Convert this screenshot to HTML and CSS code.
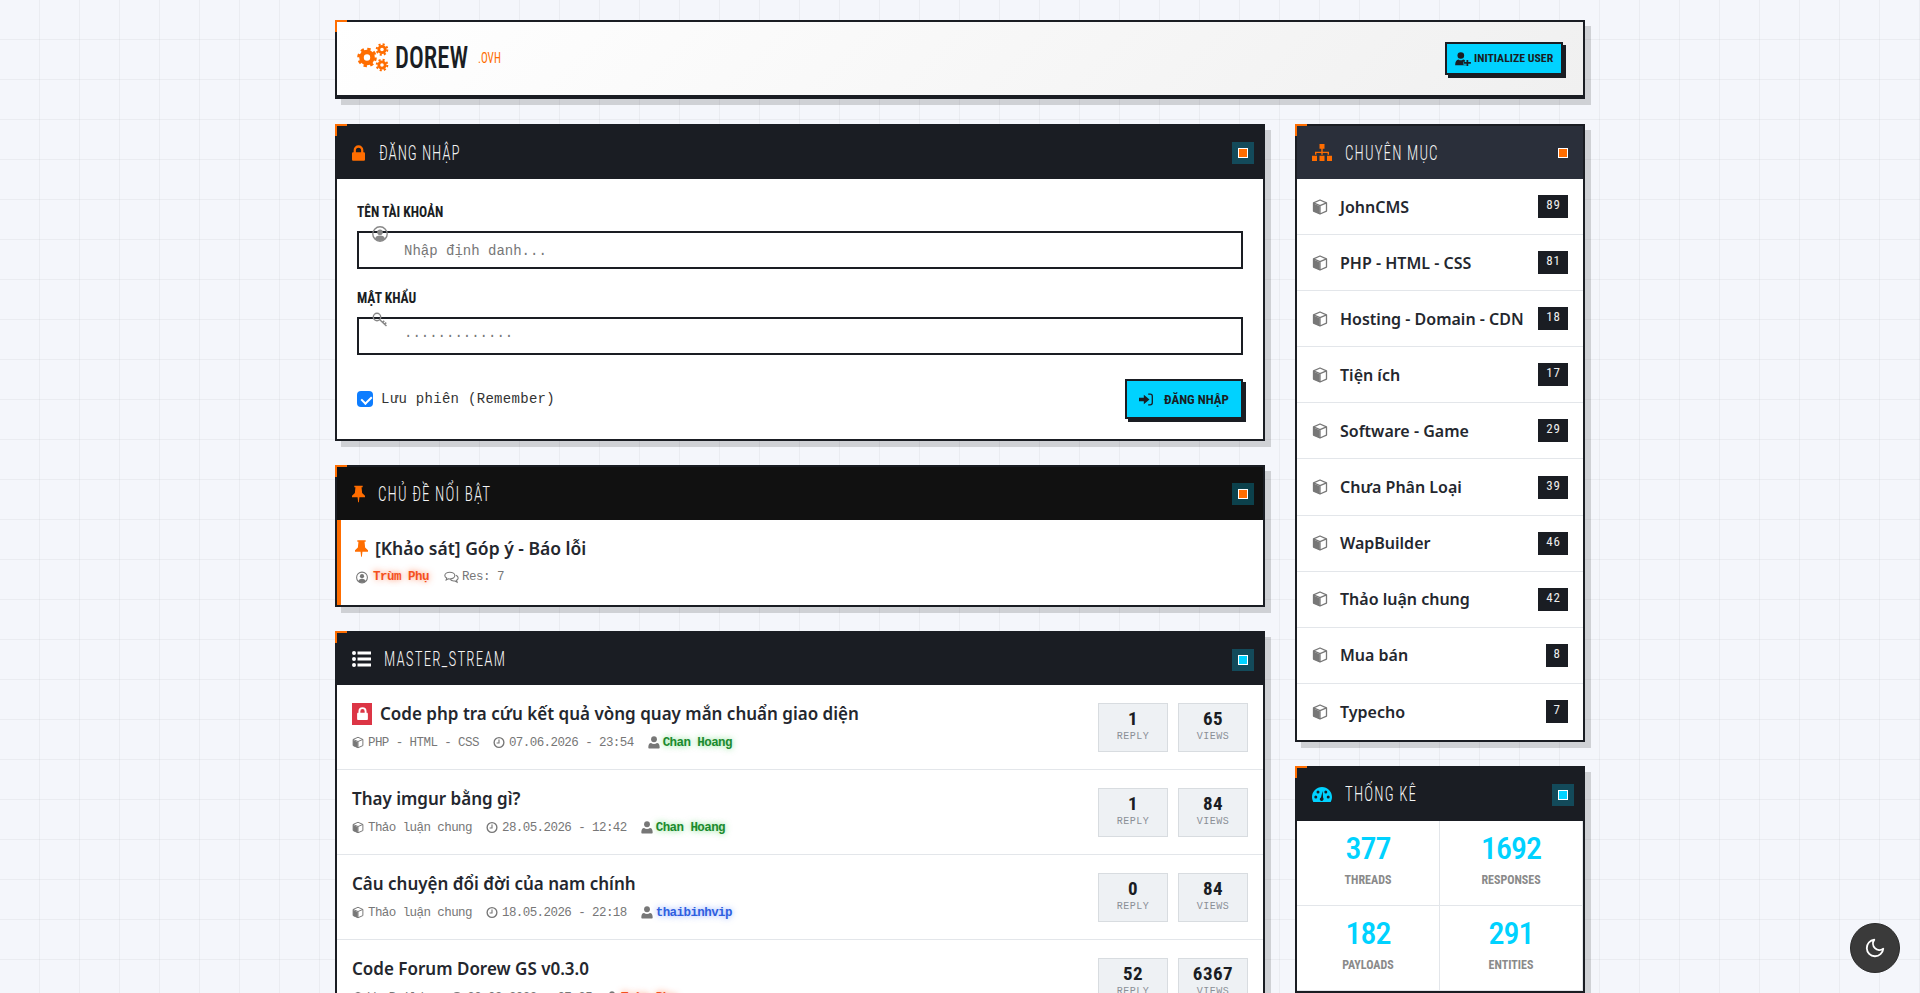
FILE: index.html
```html
<!DOCTYPE html>
<html lang="vi">
<head>
<meta charset="utf-8">
<title>DOREW .OVH</title>
<link rel="stylesheet" href="styles.css">
</head>
<body>
<svg class="defs" width="0" height="0" aria-hidden="true">
  <symbol id="cube" viewBox="0 0 16 16"><path d="M1.5 4.6 7.7 7.2V15L1.5 12.2z" fill="currentColor"/><path d="M8 1 14.5 3.9V12.1L8 15 1.5 12.1V3.9zM1.5 3.9 8 6.7l6.5-2.8M8 6.7V15" fill="none" stroke="currentColor" stroke-width="1.3" stroke-linejoin="round"/></symbol>
  <symbol id="lock" viewBox="2 .5 12 14.500"><path fill-rule="evenodd" fill="currentColor" d="M3.5 7V5.2a4.5 4.5 0 0 1 9 0V7h.3c.7 0 1.2.5 1.2 1.2v5.6c0 .7-.5 1.2-1.2 1.2H3.2C2.5 15 2 14.500 2 13.800V8.200C2 7.500 2.500 7 3.200 7zM5.600 7h4.800V5.200a2.400 2.400 0 0 0-4.800 0z"/></symbol>
  <symbol id="sitemap" viewBox="0 0 20 16" preserveAspectRatio="none"><path fill="currentColor" d="M7.500 0h5v4.500h-1.800v2.700h6.300v3h-1.400V8.500h-4.900v1.700H9.300V8.500H4.400v1.700H3v-3h6.300V4.500H7.500zM0 11h5v5H0zM7.500 11h5v5h-5zM15 11h5v5h-5z"/></symbol>
  <symbol id="pin" viewBox="1 0 14 18"><path fill="currentColor" d="M3.500 0h9v1.800h-1.200l.6 6.200L15 11v1.600H9l-.6 5.400h-.8L7 12.600H1V11l3.100-3 .6-6.200H3.500z"/></symbol>
  <symbol id="list" viewBox="0 0 19 16"><path fill="currentColor" d="M0 2a2 2 0 1 1 4 0 2 2 0 0 1-4 0zM0 8a2 2 0 1 1 4 0 2 2 0 0 1-4 0zM0 14a2 2 0 1 1 4 0 2 2 0 0 1-4 0zM5.500.6H19v2.800H5.500zM5.500 6.600H19v2.800H5.500zM5.500 12.600H19v2.800H5.500z"/></symbol>
  <symbol id="usercircle" viewBox="0 0 16 16"><circle cx="8" cy="8" r="7.200" fill="none" stroke="currentColor" stroke-width="1.400"/><circle cx="8" cy="6.200" r="2.800" fill="currentColor"/><path fill="currentColor" d="M2.900 13c.5-2.400 2.400-3.500 5.100-3.500s4.600 1.100 5.100 3.500C11.800 14.300 10 15 8 15s-3.800-.7-5.100-2z"/></symbol>
  <symbol id="key" viewBox="0 0 16 16"><circle cx="5" cy="5" r="3.700" fill="none" stroke="currentColor" stroke-width="1.400"/><path d="M7.800 7.800 14.500 14M10.500 10.300l1.800-1.500M12.500 12.200l1.800-1.500" fill="none" stroke="currentColor" stroke-width="1.500"/></symbol>
  <symbol id="userplus" viewBox="0 0 18 16"><circle cx="6.500" cy="4" r="3.800" fill="currentColor"/><path fill="currentColor" d="M0 15c0-4 1.800-6.500 3.800-6.500 1 .7 1.800 1 2.700 1s1.700-.3 2.700-1c.8 0 1.500.3 2 .9v1.600h-1.700v3.500H13V15z"/><path fill="currentColor" d="M13 9h2v2.500h3v2h-3V16h-2v-2.500h-3v-2h3z"/></symbol>
  <symbol id="signin" viewBox="0 0 16 14"><path fill="currentColor" d="M0 5h5.500V1.500L12 7l-6.500 5.500V9H0z"/><path fill="none" stroke="currentColor" stroke-width="1.500" d="M10.500 .8h2.300c1.200 0 2.400 1 2.400 2.400v7.600c0 1.400-1.200 2.400-2.400 2.400h-2.300"/></symbol>
  <symbol id="clock" viewBox="0 0 16 16"><circle cx="8" cy="8" r="6.500" fill="none" stroke="currentColor" stroke-width="1.800"/><path d="M8 4v4.600H4.800" fill="none" stroke="currentColor" stroke-width="1.500"/></symbol>
  <symbol id="user" viewBox="0 0 14 16"><circle cx="7" cy="4" r="3.600" fill="currentColor"/><path fill="currentColor" d="M1 15.500C.3 15.500 0 15 0 14.300 0 11 1 8.500 3.400 8.500c.9.800 2.200 1.200 3.600 1.200s2.700-.4 3.600-1.200c2.400 0 3.400 2.500 3.400 5.800 0 .7-.3 1.200-1 1.200z"/></symbol>
  <symbol id="comments" viewBox="0 0 18 15"><path fill="none" stroke="currentColor" stroke-width="1.300" d="M7 1.200c3.300 0 6 1.800 6 4s-2.700 4-6 4c-.7 0-1.300-.1-1.900-.2L2.600 10.400l.6-2.200C1.800 7.500 1 6.400 1 5.200c0-2.200 2.700-4 6-4z"/><path fill="none" stroke="currentColor" stroke-width="1.300" d="M14.200 4.800C16 5.500 17 6.600 17 8c0 1.100-.7 2.100-1.900 2.800l.6 2.300-2.600-1.500c-2.200.3-4.600-.4-5.600-1.800"/></symbol>
  <symbol id="gauge" viewBox="0 0 20 15"><path fill="currentColor" fill-rule="evenodd" d="M10 0c5.500 0 10 4.500 10 10 0 1.800-.5 3.500-1.300 5H1.300C.5 13.500 0 11.800 0 10 0 4.500 4.500 0 10 0zM3.800 8.500a1.500 1.500 0 1 0 0 3 1.500 1.500 0 0 0 0-3zM6 3.500a1.500 1.500 0 1 0 0 3 1.500 1.500 0 0 0 0-3zM13.800 3.500a1.500 1.500 0 1 0 0 3 1.500 1.500 0 0 0 0-3zM16.200 8.500a1.500 1.500 0 1 0 0 3 1.500 1.500 0 0 0 0-3zM10.600 4 9 10.500c-1 .4-1.500 1.500-1 2.500.500.9 1.600 1.200 2.500.8.900-.4 1.300-1.500.9-2.500l-.3-.5z"/></symbol>
  <symbol id="moon" viewBox="0 0 24 24"><path d="M21 12.790A9 9 0 1 1 11.210 3 7 7 0 0 0 21 12.790z" fill="none" stroke="currentColor" stroke-width="2" stroke-linejoin="round"/></symbol>
</svg>

<div class="wrap">
  <header class="topbar">
    <a class="brand">
      <svg class="gears" viewBox="0 0 32 29" width="32" height="29" aria-hidden="true">
        <g fill="none" stroke="#ff6d00">
          <circle cx="10" cy="14.500" r="5.500" stroke-width="4.600"/><circle cx="10" cy="14.500" r="8.500" stroke-width="2.600" stroke-dasharray="3.340 3.340"/>
          <circle cx="25" cy="6.500" r="3.200" stroke-width="2.800"/><circle cx="25" cy="6.500" r="5.300" stroke-width="2" stroke-dasharray="2.080 2.080"/>
          <circle cx="25" cy="22" r="3.200" stroke-width="2.800"/><circle cx="25" cy="22" r="5.300" stroke-width="2" stroke-dasharray="2.080 2.080"/>
        </g>
      </svg>
      <span class="brand-name">DOREW</span>
      <span class="brand-tld">.OVH</span>
    </a>
    <button class="btn btn-init" type="button"><svg class="i-user-plus"><use href="#userplus"/></svg><span>INITIALIZE USER</span></button>
  </header>

  <div class="layout">
    <main class="col-main">
      <section class="card">
        <div class="card-head">
          <svg class="hi hi-lock"><use href="#lock"/></svg>
          <h2 class="head-title head-login">ĐĂNG NHẬP</h2>
          <span class="mark mark-orange mark-ring"></span>
        </div>
        <form class="login">
          <div class="group">
            <label class="lbl" for="u">TÊN TÀI KHOẢN</label>
            <svg class="field-ico"><use href="#usercircle"/></svg>
            <input class="field" id="u" type="text" placeholder="Nhập định danh...">
          </div>
          <div class="group">
            <label class="lbl" for="p">MẬT KHẨU</label>
            <svg class="field-ico"><use href="#key"/></svg>
            <input class="field field-pass" id="p" type="text" placeholder=".............">
          </div>
          <div class="form-foot">
            <label class="remember"><input type="checkbox" checked><span>Lưu phiên (Remember)</span></label>
            <button class="btn btn-login" type="button"><svg class="i-signin"><use href="#signin"/></svg><span>ĐĂNG NHẬP</span></button>
          </div>
        </form>
      </section>

      <section class="card">
        <div class="card-head head-black">
          <svg class="hi hi-pin"><use href="#pin"/></svg>
          <h2 class="head-title">CHỦ ĐỀ NỔI BẬT</h2>
          <span class="mark mark-orange mark-ring"></span>
        </div>
        <div class="featured">
          <div class="feat-title"><svg class="feat-pin"><use href="#pin"/></svg><span>[Khảo sát] Góp ý - Báo lỗi</span></div>
          <div class="feat-meta">
            <svg class="m-ico m-uc"><use href="#usercircle"/></svg><span class="name name-red">Trùm Phụ</span>
            <svg class="m-ico m-cm"><use href="#comments"/></svg><span>Res: 7</span>
          </div>
        </div>
      </section>

      <section class="card">
        <div class="card-head head-stream">
          <svg class="hi hi-list"><use href="#list"/></svg>
          <h2 class="head-title head-mono">MASTER_STREAM</h2>
          <span class="mark mark-cyan mark-ring"></span>
        </div>
        <article class="topic">
          <div class="topic-body">
            <h3 class="topic-title"><span class="lockbox"><svg><use href="#lock"/></svg></span>Code php tra cứu kết quả vòng quay mắn chuẩn giao diện</h3>
            <div class="meta">
              <span class="mi"><svg class="m-ico"><use href="#cube"/></svg>PHP - HTML - CSS</span>
              <span class="mi"><svg class="m-ico"><use href="#clock"/></svg>07.06.2026 - 23:54</span>
              <span class="mi"><svg class="m-ico"><use href="#user"/></svg><span class="name name-green">Chan Hoang</span></span>
            </div>
          </div>
          <div class="stat"><b>1</b><small>REPLY</small></div>
          <div class="stat"><b>65</b><small>VIEWS</small></div>
        </article>
        <article class="topic">
          <div class="topic-body">
            <h3 class="topic-title">Thay imgur bằng gì?</h3>
            <div class="meta">
              <span class="mi"><svg class="m-ico"><use href="#cube"/></svg>Thảo luận chung</span>
              <span class="mi"><svg class="m-ico"><use href="#clock"/></svg>28.05.2026 - 12:42</span>
              <span class="mi"><svg class="m-ico"><use href="#user"/></svg><span class="name name-green">Chan Hoang</span></span>
            </div>
          </div>
          <div class="stat"><b>1</b><small>REPLY</small></div>
          <div class="stat"><b>84</b><small>VIEWS</small></div>
        </article>
        <article class="topic">
          <div class="topic-body">
            <h3 class="topic-title">Câu chuyện đổi đời của nam chính</h3>
            <div class="meta">
              <span class="mi"><svg class="m-ico"><use href="#cube"/></svg>Thảo luận chung</span>
              <span class="mi"><svg class="m-ico"><use href="#clock"/></svg>18.05.2026 - 22:18</span>
              <span class="mi"><svg class="m-ico"><use href="#user"/></svg><span class="name name-blue">thaibinhvip</span></span>
            </div>
          </div>
          <div class="stat"><b>0</b><small>REPLY</small></div>
          <div class="stat"><b>84</b><small>VIEWS</small></div>
        </article>
        <article class="topic">
          <div class="topic-body">
            <h3 class="topic-title">Code Forum Dorew GS v0.3.0</h3>
            <div class="meta">
              <span class="mi"><svg class="m-ico"><use href="#cube"/></svg>WapBuilder</span>
              <span class="mi"><svg class="m-ico"><use href="#clock"/></svg>30.09.2023 - 07:35</span>
              <span class="mi"><svg class="m-ico"><use href="#user"/></svg><span class="name name-red">Trùm Phụ</span></span>
            </div>
          </div>
          <div class="stat"><b>52</b><small>REPLY</small></div>
          <div class="stat"><b>6367</b><small>VIEWS</small></div>
        </article>
      </section>
    </main>

    <aside class="col-side">
      <section class="card">
        <div class="card-head head-slate">
          <svg class="hi hi-sitemap"><use href="#sitemap"/></svg>
          <h2 class="head-title">CHUYÊN MỤC</h2>
          <span class="mark mark-orange mark-side"></span>
        </div>
        <ul class="cats">
          <li class="cat"><svg class="cat-ico"><use href="#cube"/></svg><span class="cat-name">JohnCMS</span><span class="count">89</span></li>
          <li class="cat"><svg class="cat-ico"><use href="#cube"/></svg><span class="cat-name">PHP - HTML - CSS</span><span class="count">81</span></li>
          <li class="cat"><svg class="cat-ico"><use href="#cube"/></svg><span class="cat-name">Hosting - Domain - CDN</span><span class="count">18</span></li>
          <li class="cat"><svg class="cat-ico"><use href="#cube"/></svg><span class="cat-name">Tiện ích</span><span class="count">17</span></li>
          <li class="cat"><svg class="cat-ico"><use href="#cube"/></svg><span class="cat-name">Software - Game</span><span class="count">29</span></li>
          <li class="cat"><svg class="cat-ico"><use href="#cube"/></svg><span class="cat-name">Chưa Phân Loại</span><span class="count">39</span></li>
          <li class="cat"><svg class="cat-ico"><use href="#cube"/></svg><span class="cat-name">WapBuilder</span><span class="count">46</span></li>
          <li class="cat"><svg class="cat-ico"><use href="#cube"/></svg><span class="cat-name">Thảo luận chung</span><span class="count">42</span></li>
          <li class="cat"><svg class="cat-ico"><use href="#cube"/></svg><span class="cat-name">Mua bán</span><span class="count">8</span></li>
          <li class="cat"><svg class="cat-ico"><use href="#cube"/></svg><span class="cat-name">Typecho</span><span class="count">7</span></li>
        </ul>
      </section>

      <section class="card">
        <div class="card-head">
          <svg class="hi hi-gauge"><use href="#gauge"/></svg>
          <h2 class="head-title">THỐNG KÊ</h2>
          <span class="mark mark-cyan mark-ring"></span>
        </div>
        <div class="stats">
          <div class="cell"><strong>377</strong><span>THREADS</span></div>
          <div class="cell"><strong>1692</strong><span>RESPONSES</span></div>
          <div class="cell"><strong>182</strong><span>PAYLOADS</span></div>
          <div class="cell"><strong>291</strong><span>ENTITIES</span></div>
        </div>
      </section>
    </aside>
  </div>
</div>

<button class="theme" type="button" aria-label="Theme"><svg><use href="#moon"/></svg></button>
</body>
</html>
```

FILE: styles.css
```css
* { box-sizing: border-box; }
html, body { height: 100%; }
body {
  margin: 0;
  overflow: hidden;
  color: #1a1d23;
  font-family: "Noto Sans", sans-serif;
  background-color: #f4f6fb;
  background-image:
    linear-gradient(rgba(0, 0, 0, .04) 1px, transparent 1px),
    linear-gradient(90deg, rgba(0, 0, 0, .04) 1px, transparent 1px);
  background-size: 40px 40px;
  background-position: -1px -1px;
}
.defs { position: absolute; }
.wrap { width: 1250px; margin: 0 auto; padding-top: 20px; }

.brand-name, .brand-tld, .btn, .head-title, .lbl, .stat b, .cell strong, .cell span, .count {
  font-family: "Roboto", sans-serif;
  font-stretch: 75%;
  font-variation-settings: "wdth" 75;
}

.topbar, .card {
  position: relative;
  border: 2px solid #1a1d23;
  background: #fff;
  box-shadow: 6px 6px 0 rgba(0, 0, 0, .15);
}
.topbar::before, .card::before {
  content: "";
  position: absolute;
  left: -2px;
  top: -2px;
  width: 10px;
  height: 10px;
  border-left: 2px solid #ff6d00;
  border-top: 2px solid #ff6d00;
}

.topbar {
  height: 79px;
  border-bottom-width: 4px;
  margin-bottom: 25px;
  display: flex;
  align-items: center;
  justify-content: space-between;
  padding: 0 20px;
  background: linear-gradient(135deg, #fff 0%, #f0f0f0 100%);
}
.brand { display: flex; align-items: center; margin-top: -3px; }
.gears { display: block; margin-right: 6px; }
.brand-name {
  font-size: 32px;
  font-weight: 500;
  line-height: 1;
  width: 83px;
  transform: scaleX(.77);
  transform-origin: left center;
}
.brand-tld {
  font-size: 15px;
  line-height: 1;
  color: #ff6d00;
  margin-top: 2px;
  transform: scaleX(.75);
  transform-origin: left center;
}

.btn {
  display: flex;
  align-items: center;
  border: 2px solid #1a1d23;
  background: #00d2ff;
  color: #1a1d23;
  box-shadow: 3px 3px 0 #1a1d23;
  font-weight: 700;
  line-height: 1;
  white-space: nowrap;
  padding: 0;
}
.btn-init { width: 118px; height: 33px; margin-top: -1px; padding: 1px 0 0 8px; gap: 3px; font-size: 11.8px; }
.i-user-plus { width: 16px; height: 14px; flex: none; }
.btn-login { width: 118px; height: 40px; padding-left: 12px; gap: 11px; font-size: 13px; }
.i-signin { width: 14px; height: 13px; flex: none; }

.layout { display: grid; grid-template-columns: 930px 290px; gap: 30px; align-items: start; }
.col-main, .col-side { display: flex; flex-direction: column; gap: 24px; }

.card-head {
  height: 53px;
  display: flex;
  align-items: center;
  padding: 0 10px 0 15px;
  background: #1a1d23;
  color: #eee;
}
.head-black { background: #111; }
.head-stream { height: 52px; }
.head-slate { background: #2a2f3a; }
.head-title {
  margin: 0;
  font-size: 20px;
  font-weight: 300;
  line-height: 1;
  letter-spacing: 1.5px;
  color: #f4f4f4;
  transform: scaleX(.75);
  transform-origin: left center;
}
.head-login { letter-spacing: 1.2px; }
.hi { flex: none; color: #ff6d00; }
.hi-lock { width: 13px; height: 16px; margin-right: 14px; }
.hi-pin { width: 13px; height: 18px; margin-right: 13px; }
.hi-list { width: 19px; height: 16px; margin-right: 13px; color: #fff; }
.hi-sitemap { width: 20px; height: 17px; margin-right: 13px; }
.hi-gauge { width: 20px; height: 15px; margin-right: 13px; color: #00d2ff; }
.mark {
  width: 10px;
  height: 10px;
  margin-left: auto;
  margin-right: 5px;
  border: 1px solid #fff;
  flex: none;
  margin-top: 1px;
}
.mark-orange { background: #ff6d00; }
.mark-cyan { background: #00d2ff; }
.mark-ring { box-shadow: 0 0 0 6px rgba(0, 210, 255, .25); }

.login { padding: 22px 20px 20px; }
.group { position: relative; margin-bottom: 18px; }
.lbl {
  display: block;
  height: 20px;
  margin-bottom: 10px;
  font-size: 15px;
  font-weight: 700;
  line-height: 22px;
  color: #1a1d23;
  transform: scaleX(.9);
  transform-origin: left center;
}
.field {
  display: block;
  width: 100%;
  height: 38px;
  border: 2px solid #1a1d23;
  border-radius: 0;
  background: #fff;
  padding: 1px 0 0 45px;
  font: 14px "Liberation Mono", monospace;
  outline: none;
}
.field::placeholder { color: #777; opacity: 1; }
.field-pass { padding: 0 0 6px 45px; }
.field-ico { position: absolute; left: 15px; top: 25px; width: 16px; height: 16px; color: #888; }
.form-foot { display: flex; align-items: center; justify-content: space-between; margin-top: 24px; }
.remember { display: flex; align-items: center; gap: 8px; font: 14px "Liberation Mono", monospace; letter-spacing: .3px; color: #333; }
.remember input {
  appearance: none;
  position: relative;
  width: 16px;
  height: 16px;
  margin: 0;
  border-radius: 4px;
  background: #0d7dff;
}
.remember input::after {
  content: "";
  position: absolute;
  left: 5.5px;
  top: 3px;
  width: 5px;
  height: 8px;
  border-right: 2px solid #fff;
  border-bottom: 2px solid #fff;
  transform: rotate(45deg);
}

.featured { border-left: 4px solid #ff6d00; height: 85px; padding: 15px 12px 0 14px; }
.feat-title { display: flex; align-items: center; gap: 7px; font-size: 17.5px; line-height: 26px; font-weight: 600; color: #24272e; }
.feat-pin { width: 13px; height: 17px; color: #ff6d00; flex: none; }
.feat-meta { display: flex; align-items: center; margin-top: 8px; font: 12.5px/16px "Liberation Mono", monospace; letter-spacing: -.5px; color: #777; }
.m-ico { width: 12px; height: 13px; flex: none; color: #777; }
.m-uc { margin: 0 5px 0 1px; }
.m-cm { width: 15px; margin: 0 3px 0 15px; }

.topic {
  display: flex;
  align-items: center;
  gap: 10px;
  height: 85px;
  padding: 0 15px;
  border-bottom: 1px solid #e3e6ea;
}
.topic-body { flex: 1; min-width: 0; }
.topic-title { margin: -2px 0 9px; display: flex; align-items: center; font-size: 17px; line-height: 24px; font-weight: 600; color: #24272e; }
.lockbox { width: 20px; height: 22px; margin-right: 8px; background: #dc3545; color: #fff; display: flex; align-items: center; justify-content: center; flex: none; }
.lockbox svg { width: 11px; height: 13px; }
.meta { display: flex; gap: 14px; font: 12.5px/16px "Liberation Mono", monospace; letter-spacing: -.57px; color: #777; }
.mi { display: flex; align-items: center; gap: 4px; }
.name { font-weight: 700; }
.mi .name { margin-left: -1px; }
.name-green { color: #1c8a2e; text-shadow: 0 0 6px rgba(40, 200, 60, .6); }
.name-blue { color: #2f5fe0; text-shadow: 0 0 6px rgba(60, 110, 255, .6); }
.name-red { color: #f4511e; text-shadow: 0 0 6px rgba(255, 90, 30, .7); }

.stat {
  flex: none;
  width: 70px;
  height: 49px;
  background: #eef1f4;
  border: 1px solid #d8dce0;
  display: flex;
  flex-direction: column;
  align-items: center;
  padding-top: 4px;
}
.stat b { font-size: 19px; font-weight: 700; line-height: 22px; color: #1a1d23; letter-spacing: .5px; }
.stat small { margin-top: 1px; font: 10px/12px "Liberation Mono", monospace; color: #8a8f96; letter-spacing: .5px; }

.cats { list-style: none; margin: 0; padding: 0; }
.cat {
  display: flex;
  align-items: center;
  height: 56.1px;
  padding: 0 15px;
  border-bottom: 1px solid #e3e6ea;
}
.cat:last-child { border-bottom: 0; }
.cat-ico { width: 16px; height: 16px; color: #777; flex: none; margin-right: 12px; }
.cat-name { font-size: 16px; font-weight: 600; color: #24272e; }
.count {
  margin-left: auto;
  height: 23px;
  padding: 0 7px 0 8px;
  background: #1a1d23;
  color: #eee;
  font-size: 13px;
  line-height: 20px;
  letter-spacing: 1px;
}

.stats { display: grid; grid-template-columns: 1fr 1fr; }
.cell {
  height: 85px;
  display: flex;
  flex-direction: column;
  align-items: center;
  padding-top: 9px;
  border-bottom: 1px solid #e3e6ea;
  border-right: 1px solid #e3e6ea;
}
.cell strong { font-size: 32px; font-weight: 500; line-height: 36px; letter-spacing: -1px; color: #00d2ff; }
.cell span { margin-top: 6px; font-size: 12px; font-weight: 700; line-height: 16px; color: #8a8a8a; }

.theme {
  position: fixed;
  right: 20px;
  bottom: 20px;
  width: 50px;
  height: 50px;
  border-radius: 50%;
  border: 1px solid #2a2a2a;
  background: #3a3a3a;
  color: #fff;
  display: flex;
  align-items: center;
  justify-content: center;
  padding: 0;
}
.theme svg { width: 22px; height: 22px; }
```
